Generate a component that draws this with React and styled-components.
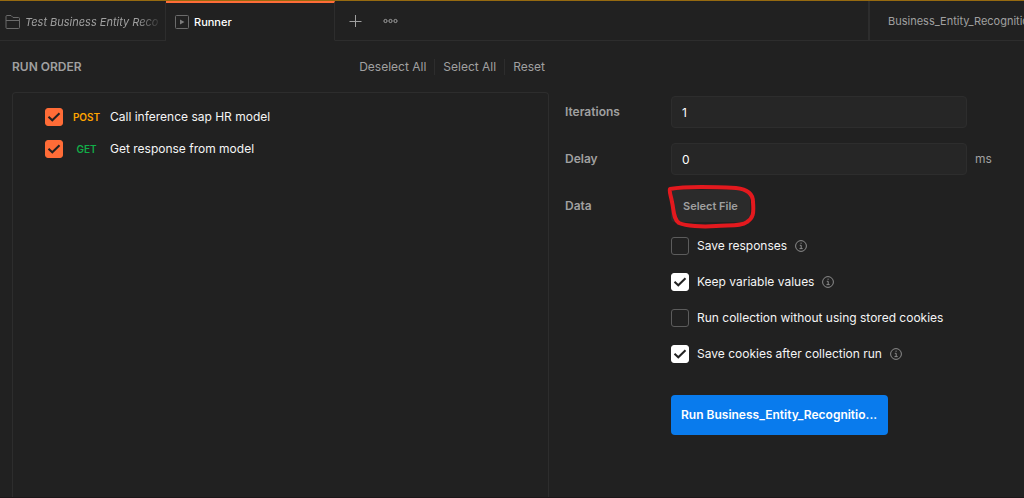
import { useState } from "react";
import styled, { createGlobalStyle, css } from "styled-components";

const GlobalStyle = createGlobalStyle`
  * {
    box-sizing: border-box;
  }

  body {
    margin: 0;
    background: #212121;
    color: #f5f5f5;
    font-family: Inter, "Liberation Sans", sans-serif;
    font-size: 12px;
    line-height: 20px;
  }

  button,
  input {
    font: inherit;
  }
`;

const resetButton = css`
  background: transparent;
  border: none;
  padding: 0;
  color: #a0a0a0;
  cursor: pointer;
`;

const Page = styled.div`
  display: flex;
  flex-direction: column;
  min-height: 100vh;
  border-top: 1px solid #966a10;
  border-bottom: 1px solid #1c1719;
`;

const TabBar = styled.header`
  display: flex;
  height: 40px;
`;

const Tab = styled.button`
  ${resetButton}
  display: flex;
  align-items: center;
  gap: 4px;
  flex: none;
  width: ${(props) => (props.$active ? 169 : 166)}px;
  padding: 0 8px 0 ${(props) => (props.$active ? 8 : 5)}px;
  border-right: 1px solid #2d2d2d;
  border-top: 2px solid ${(props) => (props.$active ? "#ff6c37" : "#212121")};
  border-bottom: 1px solid ${(props) => (props.$active ? "#212121" : "#2d2d2d")};
  color: ${(props) => (props.$active ? "#ffffff" : "#a0a0a0")};
  font-size: 11px;
  font-weight: ${(props) => (props.$active ? 500 : 400)};
  font-style: ${(props) => (props.$active ? "normal" : "italic")};

  svg {
    flex: none;
  }
`;

const TabTitle = styled.span`
  white-space: nowrap;
  ${(props) =>
    props.$fade &&
    css`
      mask-image: linear-gradient(90deg, #000 84%, rgba(0, 0, 0, 0.2));
    `}
`;

const TabActions = styled.div`
  display: flex;
  align-items: center;
  gap: 20px;
  flex: 1;
  padding-left: 12px;
  border-bottom: 1px solid #2d2d2d;
`;

const IconButton = styled.button`
  ${resetButton}
  display: flex;
`;

const Environment = styled.button`
  ${resetButton}
  flex: none;
  width: 156px;
  padding-left: 18px;
  overflow: hidden;
  border-left: 2px solid #2d2d2d;
  border-bottom: 1px solid #2d2d2d;
  font-size: 11px;
  text-align: left;
  white-space: nowrap;
`;

const Body = styled.main`
  display: grid;
  grid-template-columns: minmax(0, 1fr) 459px;
  gap: 16px;
  flex: 1;
  padding-left: 12px;
`;

const Order = styled.section`
  display: flex;
  flex-direction: column;
`;

const OrderHeader = styled.div`
  display: flex;
  align-items: center;
  justify-content: space-between;
  height: 51px;
  padding-right: 4px;
`;

const Title = styled.h2`
  margin: 0;
  color: #a0a0a0;
  font-size: 12px;
  font-weight: 600;
`;

const Links = styled.div`
  display: flex;
  align-items: center;
`;

const TextButton = styled.button`
  ${resetButton}
  line-height: 16px;

  & + & {
    margin-left: 8px;
    padding-left: 8px;
    border-left: 1px solid #2d2d2d;
  }
`;

const OrderList = styled.ul`
  flex: 1;
  margin: 0;
  padding: 8px 0 0 32px;
  border: 1px solid #2d2d2d;
  border-bottom: none;
  border-radius: 4px 4px 0 0;
  list-style: none;
`;

const Request = styled.li`
  label {
    display: flex;
    align-items: center;
    height: 32px;
  }
`;

const Method = styled.span`
  width: 47px;
  color: ${(props) => props.$color};
  font-size: 10px;
  font-weight: 600;
  line-height: 16px;
  text-align: center;
`;

const CheckboxBox = styled.span`
  display: grid;
  flex: none;

  svg {
    grid-area: 1 / 1;
    place-self: center;
    pointer-events: none;
  }
`;

const CheckboxInput = styled.input`
  grid-area: 1 / 1;
  appearance: none;
  width: 18px;
  height: 18px;
  margin: 0;
  border: 1px solid #5c5c5c;
  border-radius: 3px;

  &:checked {
    border-color: ${(props) => props.$fill};
    background: ${(props) => props.$fill};
  }
`;

const Settings = styled.form`
  display: flex;
  flex-direction: column;
  gap: 15px;
  padding-top: 55px;
`;

const Field = styled.div`
  display: grid;
  grid-template-columns: 106px 296px 1fr;
  align-items: center;
  height: 32px;
`;

const FieldLabel = styled.label`
  color: #a0a0a0;
  font-weight: 600;
`;

const NumberInput = styled.input`
  width: 100%;
  height: 32px;
  padding: 0 10px;
  background: #262626;
  border: 1px solid #2d2d2d;
  border-radius: 4px;
  color: #ffffff;
  outline: none;
`;

const Unit = styled.span`
  padding-left: 8px;
  color: #a0a0a0;
`;

const FileCell = styled.div`
  position: relative;
  justify-self: start;
`;

const FileButton = styled.button`
  ${resetButton}
  height: 32px;
  padding: 0 12px;
  background: #2b2b2b;
  border-radius: 4px;
  font-size: 11px;
  font-weight: 600;
`;

const Marker = styled.svg`
  position: absolute;
  top: -6px;
  left: -5px;
  pointer-events: none;
`;

const Options = styled.div`
  display: flex;
  flex-direction: column;
  gap: 18px;
  padding-left: 106px;
`;

const Option = styled.div`
  display: flex;
  align-items: center;
  gap: 8px;
  height: 18px;

  label {
    display: flex;
    align-items: center;
    gap: 8px;
  }
`;

const RunButton = styled.button`
  align-self: flex-start;
  width: 217px;
  height: 40px;
  margin: 17px 0 0 106px;
  padding: 0 10px;
  background: #097bed;
  border: none;
  border-radius: 4px;
  color: #ffffff;
  font-weight: 600;
  text-align: left;
  white-space: nowrap;
  cursor: pointer;
`;

const FolderIcon = () => (
  <svg width="16" height="16" viewBox="0 0 16 16" fill="none" stroke="#6b6b6b">
    <path d="M1 13.500v-11a1 1 0 0 1 1-1h4l2 2h5.500a1 1 0 0 1 1 1v9a1 1 0 0 1-1 1H2a1 1 0 0 1-1-1zM1 6.500h13.500" />
  </svg>
);

const RunnerIcon = () => (
  <svg width="16" height="16" viewBox="0 0 16 16" fill="none" stroke="#6b6b6b">
    <rect x="1.500" y="1.500" width="13" height="13" rx="1" />
    <path d="M6 5.500v5l4.500-2.500z" fill="#7c7c7c" stroke="none" />
  </svg>
);

const PlusIcon = () => (
  <svg width="16" height="16" viewBox="0 0 16 16" stroke="#a0a0a0">
    <path d="M8.500 2v12M2.500 8.500h12" />
  </svg>
);

const MoreIcon = () => (
  <svg width="16" height="16" viewBox="0 0 16 16" fill="none" stroke="#a0a0a0">
    <circle cx="2.500" cy="8" r="1.600" />
    <circle cx="7.500" cy="8" r="1.600" />
    <circle cx="12.500" cy="8" r="1.600" />
  </svg>
);

const InfoIcon = () => (
  <svg width="12" height="12" viewBox="0 0 12 12" fill="none" stroke="#8c8c8c">
    <circle cx="6" cy="6" r="5.400" />
    <path d="M4.800 5.300h1.400v3.200M4.500 8.600h3.200M5.500 3.200h1.200" />
  </svg>
);

const Checkbox = ({ id, fill, defaultChecked }) => {
  const [checked, setChecked] = useState(defaultChecked);

  return (
    <CheckboxBox>
      <CheckboxInput
        id={id}
        type="checkbox"
        $fill={fill}
        checked={checked}
        onChange={(e) => setChecked(e.target.checked)}
      />
      {checked ? (
        <svg width="14" height="14" viewBox="0 0 14 14" fill="none" stroke="#212121" strokeWidth="2">
          <path d="M1.500 6.800l3.800 3.500L12.500 3.300" />
        </svg>
      ) : null}
    </CheckboxBox>
  );
};

const requests = [
  { id: "post", method: "POST", color: "#ffa400", name: "Call inference sap HR model" },
  { id: "get", method: "GET", color: "#12ad48", name: "Get response from model" },
];

const options = [
  { id: "responses", label: "Save responses", checked: false, info: true },
  { id: "variables", label: "Keep variable values", checked: true, info: true },
  { id: "no-cookies", label: "Run collection without using stored cookies", checked: false },
  { id: "cookies", label: "Save cookies after collection run", checked: true, info: true },
];

const App = () => (
  <Page>
    <GlobalStyle />
    <TabBar>
      <Tab>
        <FolderIcon />
        <TabTitle $fade>Test Business Entity Reco</TabTitle>
      </Tab>
      <Tab $active>
        <RunnerIcon />
        <TabTitle>Runner</TabTitle>
      </Tab>
      <TabActions>
        <IconButton aria-label="New tab">
          <PlusIcon />
        </IconButton>
        <IconButton aria-label="More">
          <MoreIcon />
        </IconButton>
      </TabActions>
      <Environment>Business_Entity_Recognitio</Environment>
    </TabBar>

    <Body>
      <Order>
        <OrderHeader>
          <Title>RUN ORDER</Title>
          <Links>
            <TextButton>Deselect All</TextButton>
            <TextButton>Select All</TextButton>
            <TextButton>Reset</TextButton>
          </Links>
        </OrderHeader>
        <OrderList>
          {requests.map(({ id, method, color, name }) => (
            <Request key={id}>
              <label htmlFor={id}>
                <Checkbox id={id} fill="#ff6c37" defaultChecked />
                <Method $color={color}>{method}</Method>
                {name}
              </label>
            </Request>
          ))}
        </OrderList>
      </Order>

      <Settings onSubmit={(e) => e.preventDefault()}>
        <Field>
          <FieldLabel htmlFor="iterations">Iterations</FieldLabel>
          <NumberInput id="iterations" defaultValue="1" />
        </Field>
        <Field>
          <FieldLabel htmlFor="delay">Delay</FieldLabel>
          <NumberInput id="delay" defaultValue="0" />
          <Unit>ms</Unit>
        </Field>
        <Field>
          <FieldLabel htmlFor="data">Data</FieldLabel>
          <FileCell>
            <FileButton id="data" type="button">
              Select File
            </FileButton>
            <Marker
              width="92"
              height="46"
              viewBox="0 0 92 46"
              fill="none"
              stroke="#e3191e"
              strokeWidth="4"
              strokeLinejoin="round"
            >
              <path d="M4 5C20 2 50 3 70 4C80 5 87 9 87 18C88 30 87 34 81 38C76 42 66 41 50 42C36 43 20 42 13 39C7 35 8 26 6 18C5 12 3 8 4 5z" />
            </Marker>
          </FileCell>
        </Field>

        <Options>
          {options.map(({ id, label, checked, info }) => (
            <Option key={id}>
              <label htmlFor={id}>
                <Checkbox id={id} fill="#ffffff" defaultChecked={checked} />
                {label}
              </label>
              {info ? <InfoIcon /> : null}
            </Option>
          ))}
        </Options>

        <RunButton type="submit">Run Business_Entity_Recognitio...</RunButton>
      </Settings>
    </Body>
  </Page>
);

export default App;
